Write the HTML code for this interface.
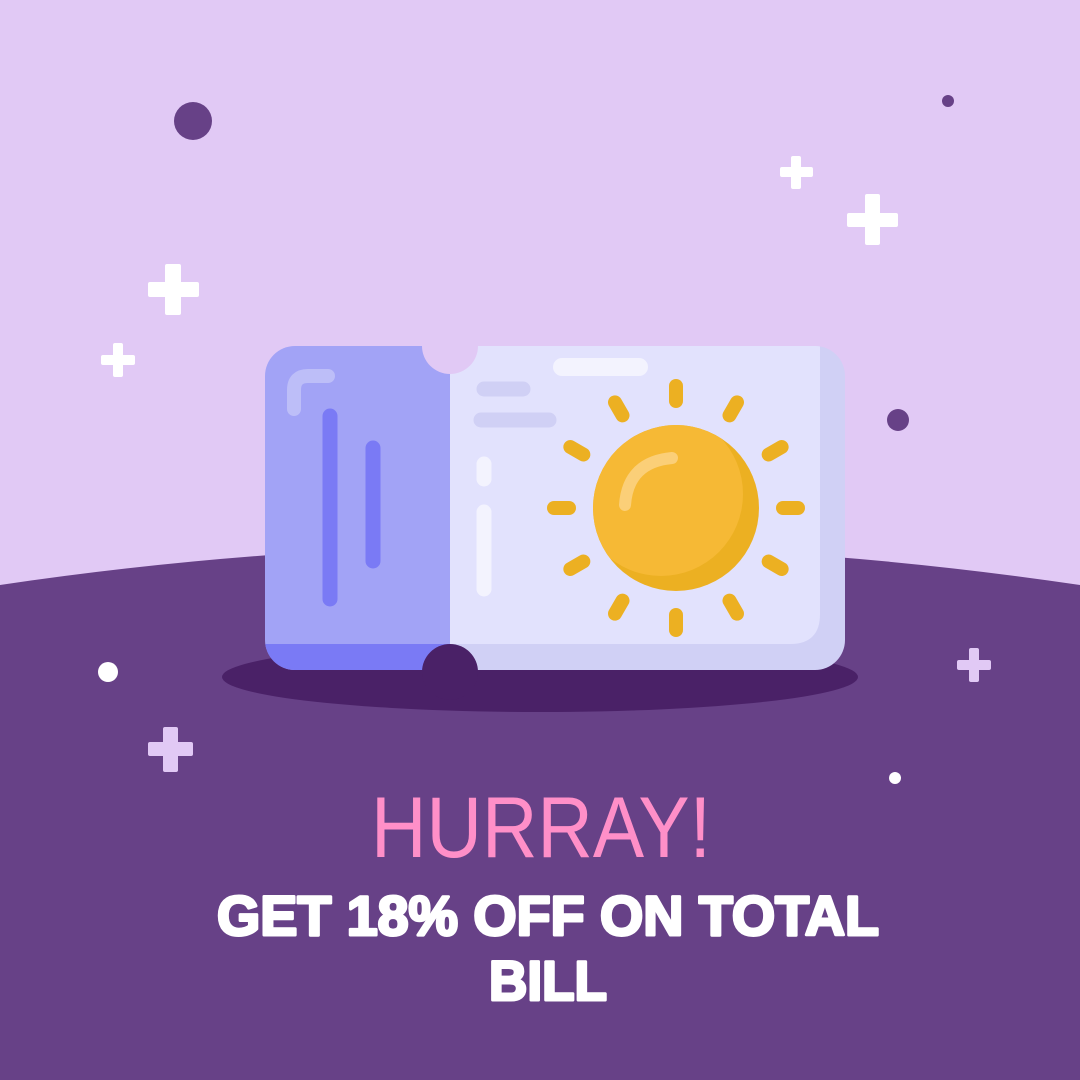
<!DOCTYPE html>
<html><head><meta charset="utf-8"><style>html,body{margin:0;padding:0;background:#e1c9f5}svg{display:block}</style></head><body>
<svg width="1080" height="1080" viewBox="0 0 1080 1080" xmlns="http://www.w3.org/2000/svg">
<rect width="1080" height="1080" fill="#e1c9f5"/>
<path d="M0 585 Q540 505 1080 585 L1080 1080 L0 1080 Z" fill="#674187"/>
<circle cx="193" cy="121" r="19" fill="#674187"/>
<circle cx="948" cy="101" r="6" fill="#674187"/>
<circle cx="898" cy="420" r="11" fill="#674187"/>
<circle cx="108" cy="672" r="10" fill="#fff"/>
<circle cx="895" cy="778" r="6" fill="#fff"/>
<g fill="#fff">
<rect x="780" y="167" width="33" height="10" rx="2"/><rect x="791" y="156" width="10" height="33" rx="2"/>
<rect x="847" y="213" width="51" height="14" rx="2"/><rect x="865" y="194" width="15" height="51" rx="2"/>
<rect x="148" y="282" width="51" height="15" rx="2"/><rect x="165" y="264" width="16" height="51" rx="2"/>
<rect x="101" y="355" width="34" height="10" rx="2"/><rect x="113" y="343" width="10" height="34" rx="2"/>
</g>
<g fill="#e1c9f5">
<rect x="957" y="660" width="34" height="10" rx="2"/><rect x="969" y="648" width="10" height="34" rx="2"/>
<rect x="148" y="742" width="45" height="14" rx="2"/><rect x="163" y="727" width="15" height="45" rx="2"/>
</g>
<ellipse cx="540" cy="677" rx="318" ry="35" fill="#4a2167"/>
<clipPath id="t"><rect x="265" y="346" width="580" height="324" rx="30"/></clipPath>
<g clip-path="url(#t)">
<rect x="265" y="346" width="186" height="324" fill="#a2a3f6"/>
<rect x="265" y="644" width="186" height="26" fill="#7a7af5"/>
<rect x="450" y="346" width="395" height="324" fill="#d0d0f5"/>
<path d="M450 346 H820 V614 Q820 644 790 644 H450 Z" fill="#e2e2fd"/>
</g>
<circle cx="450" cy="346" r="28" fill="#e1c9f5"/>
<circle cx="450" cy="672" r="28" fill="#4a2167"/>
<path d="M294 409 V390 Q294 376 308 376 H328" stroke="#bdbef8" stroke-width="14" fill="none" stroke-linecap="round"/>
<g stroke="#7a7af5" stroke-width="15" stroke-linecap="round"><line x1="330" y1="416" x2="330" y2="599"/><line x1="373" y1="448" x2="373" y2="561"/></g>
<g stroke-linecap="round">
<line x1="562" y1="367" x2="639" y2="367" stroke="#f3f3fe" stroke-width="18"/>
<line x1="484" y1="389" x2="523" y2="389" stroke="#d0d0f5" stroke-width="15"/>
<line x1="481" y1="420" x2="549" y2="420" stroke="#d0d0f5" stroke-width="15"/>
<line x1="484" y1="464" x2="484" y2="479" stroke="#f3f3fe" stroke-width="15"/>
<line x1="484" y1="512" x2="484" y2="589" stroke="#f3f3fe" stroke-width="15"/>
</g>
<g stroke="#ecb022" stroke-width="14" stroke-linecap="round" transform="translate(676,508)">
<line x1="0" y1="-107" x2="0" y2="-122"/>
<line x1="0" y1="-107" x2="0" y2="-122" transform="rotate(30)"/>
<line x1="0" y1="-107" x2="0" y2="-122" transform="rotate(60)"/>
<line x1="0" y1="-107" x2="0" y2="-122" transform="rotate(90)"/>
<line x1="0" y1="-107" x2="0" y2="-122" transform="rotate(120)"/>
<line x1="0" y1="-107" x2="0" y2="-122" transform="rotate(150)"/>
<line x1="0" y1="-107" x2="0" y2="-122" transform="rotate(180)"/>
<line x1="0" y1="-107" x2="0" y2="-122" transform="rotate(210)"/>
<line x1="0" y1="-107" x2="0" y2="-122" transform="rotate(240)"/>
<line x1="0" y1="-107" x2="0" y2="-122" transform="rotate(270)"/>
<line x1="0" y1="-107" x2="0" y2="-122" transform="rotate(300)"/>
<line x1="0" y1="-107" x2="0" y2="-122" transform="rotate(330)"/>
</g>
<circle cx="676" cy="508" r="83" fill="#ecb022"/>
<clipPath id="s"><circle cx="676" cy="508" r="83"/></clipPath>
<circle cx="661" cy="494" r="82" fill="#f6b935" clip-path="url(#s)"/>
<path d="M625 505 Q628 462 672 458" stroke="#fbcf78" stroke-width="12" fill="none" stroke-linecap="round"/>
<text x="541" y="857" text-anchor="middle" font-family="Liberation Sans, sans-serif" font-size="86" fill="#ff8fc8" textLength="340" lengthAdjust="spacingAndGlyphs">HURRAY!</text>
<text x="548" y="935" text-anchor="middle" font-family="Liberation Sans, sans-serif" font-size="56" font-weight="900" fill="#fff" stroke="#fff" stroke-width="3" stroke-linejoin="round" textLength="662" lengthAdjust="spacingAndGlyphs">GET 18% OFF ON TOTAL</text>
<text x="548" y="1000" text-anchor="middle" font-family="Liberation Sans, sans-serif" font-size="56" font-weight="900" fill="#fff" stroke="#fff" stroke-width="3" stroke-linejoin="round" textLength="118" lengthAdjust="spacingAndGlyphs">BILL</text>
</svg>
</body></html>
